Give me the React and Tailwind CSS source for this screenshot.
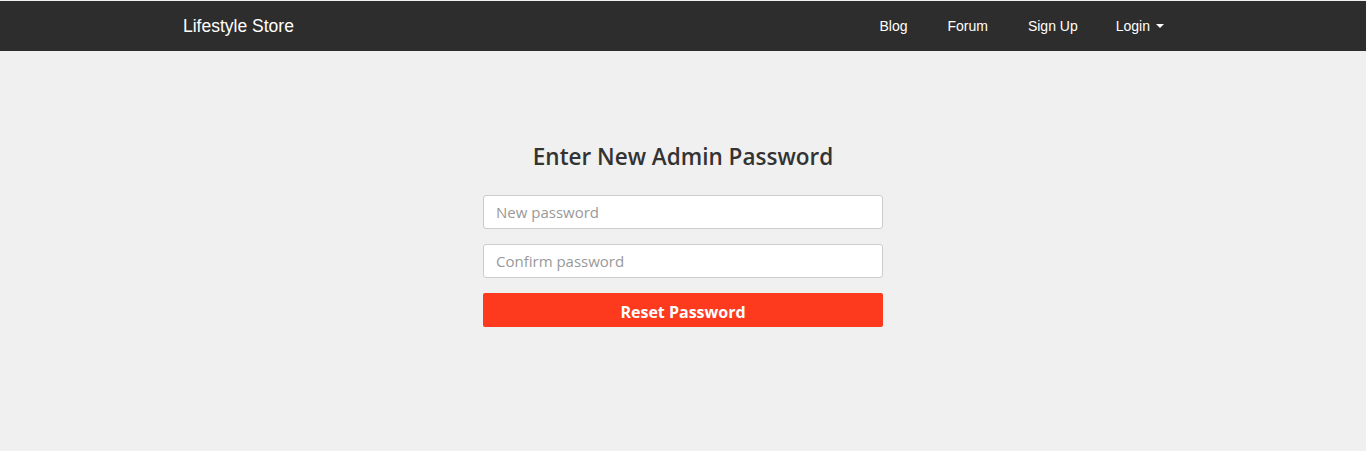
import React from 'react';

export default function App() {
  return (
    <div className="min-h-[451px] bg-[#f0f0f0] font-['Liberation_Sans',Arial,sans-serif]">
      <div className="h-px bg-[#f0f0f0]" />
      <nav className="h-[50px] bg-[#2d2d2d]">
        <div className="mx-auto flex h-full w-[1000px] items-center justify-between">
          <a className="text-[17.5px] text-white">Lifestyle Store</a>
          <ul className="flex items-center text-[14px] text-white">
            <li className="mr-[40px]">Blog</li>
            <li className="mr-[40px]">Forum</li>
            <li className="mr-[38px]">Sign Up</li>
            <li className="mr-[19px] flex items-center">
              Login
              <span className="ml-[6px] h-0 w-0 border-x-[4px] border-t-[4px] border-x-transparent border-t-white" />
            </li>
          </ul>
        </div>
      </nav>
      <main className="flex flex-col items-center pt-[91px]">
        <h1 className="font-['Open_Sans',sans-serif] text-[22.5px] font-semibold leading-[30px] text-[#333]">
          Enter New Admin Password
        </h1>
        <form className="mt-[23px] flex w-[400px] flex-col gap-[15px]">
          <input
            type="password"
            placeholder="New password"
            className="h-[34px] rounded-[3px] border border-[#ccc] bg-white px-3 font-['Open_Sans',sans-serif] text-[15px] outline-none placeholder:text-[#999]"
          />
          <input
            type="password"
            placeholder="Confirm password"
            className="h-[34px] rounded-[3px] border border-[#ccc] bg-white px-3 font-['Open_Sans',sans-serif] text-[15px] outline-none placeholder:text-[#999]"
          />
          <button
            type="button"
            className="h-[34px] rounded-[2px] bg-[#fd3a1e] pt-[3px] font-['Open_Sans',sans-serif] text-[16px] font-bold text-white"
          >
            Reset Password
          </button>
        </form>
      </main>
    </div>
  );
}
